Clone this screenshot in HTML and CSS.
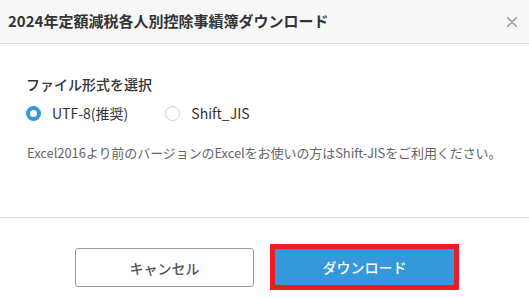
FILE: index.html
```html
<!DOCTYPE html>
<html lang="ja">
<head>
<meta charset="utf-8">
<link rel="stylesheet" href="styles.css">
</head>
<body>
<div class="modal">
  <div class="modal-header">
    <h1 class="modal-title">2024年定額減税各人別控除事績簿ダウンロード</h1>
    <button class="close" aria-label="閉じる">
      <svg width="10" height="10" viewBox="0 0 10 10"><path d="M0.8 0.8L9.2 9.2M9.2 0.8L0.8 9.2" stroke="#a6a6a6" stroke-width="1.8" stroke-linecap="round"/></svg>
    </button>
  </div>
  <div class="modal-body">
    <div class="field-label">ファイル形式を選択</div>
    <div class="radio-row">
      <label class="radio"><span class="radio-mark checked"></span><span class="radio-text">UTF-8(推奨)</span></label>
      <label class="radio"><span class="radio-mark"></span><span class="radio-text">Shift_JIS</span></label>
    </div>
    <p class="note">Excel2016より前のバージョンのExcelをお使いの方はShift-JISをご利用ください。</p>
  </div>
  <div class="modal-footer">
    <button class="btn btn-cancel">キャンセル</button>
    <button class="btn btn-primary">ダウンロード</button>
  </div>
</div>
</body>
</html>
```
FILE: styles.css
```css
* { box-sizing: border-box; }
html, body { margin: 0; padding: 0; background: #fff; }
body {
  font-family: "Noto Sans CJK JP", "Noto Sans", sans-serif;
  color: #333;
  width: 529px;
  height: 298px;
  overflow: hidden;
}
.modal { width: 529px; }
.modal-header {
  height: 44px;
  background: #f7f7f7;
  border-bottom: 1px solid #dedede;
  display: flex;
  align-items: center;
  justify-content: space-between;
  padding: 0 12px 0 8px;
}
.modal-title {
  margin: 0;
  font-size: 15px;
  font-weight: 700;
  line-height: 20px;
  color: #333;
  padding-bottom: 1px;
}
.close {
  border: 0;
  background: none;
  padding: 0;
  width: 10px;
  height: 10px;
  display: flex;
  margin-top: 1px;
}
.modal-body {
  padding: 30px 26px 54px 26px;
}
.field-label {
  font-size: 14px;
  font-weight: 500;
  line-height: 20px;
  color: #333;
}
.radio-row {
  display: flex;
  margin-top: 9px;
  height: 20px;
  align-items: center;
}
.radio {
  display: flex;
  align-items: center;
  margin-right: 37px;
}
.radio-mark {
  width: 15px;
  height: 15px;
  border-radius: 50%;
  border: 1px solid #cfcfcf;
  background: #fff;
  margin-right: 11px;
}
.radio-mark.checked {
  border: 4px solid #3498db;
}
.radio-text {
  font-size: 14px;
  line-height: 20px;
  color: #333;
}
.note {
  margin: 20px 0 0 1px;
  font-size: 13px;
  line-height: 20px;
  color: #666;
  white-space: nowrap;
  letter-spacing: -0.08px;
}
.modal-footer {
  border-top: 1px solid #dedede;
  display: flex;
  justify-content: center;
  align-items: flex-start;
  gap: 21px;
  padding-top: 30px;
}
.btn {
  width: 179px;
  font-family: inherit;
  font-size: 14px;
  font-weight: 500;
  border-radius: 3px;
  cursor: pointer;
}
.btn-cancel {
  height: 39px;
  background: #fff;
  border: 1px solid #9a9a9a;
  color: #555;
}
.btn-primary {
  height: 36px;
  margin-top: 1px;
  background: #3498db;
  border: 0;
  border-radius: 0;
  color: #fff;
  outline: 5px solid #ed1c24;
}
```
